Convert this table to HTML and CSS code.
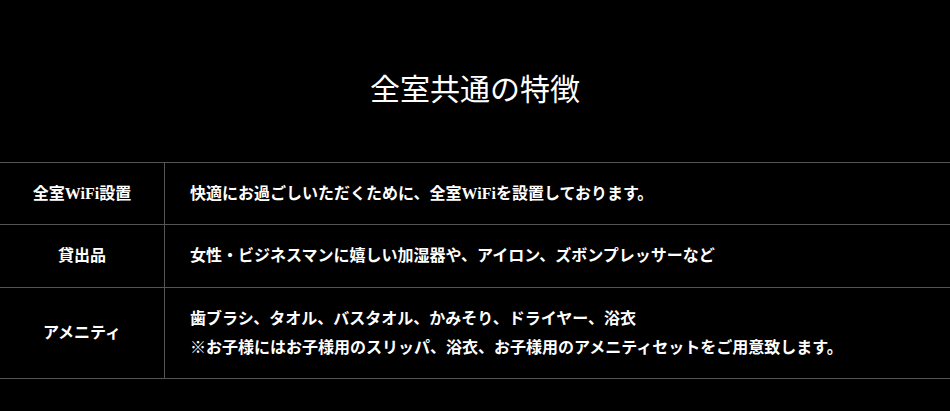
FILE: index.html
```html
<!DOCTYPE html>
<html lang="ja">
<head>
<meta charset="utf-8">
<title>全室共通の特徴</title>
<link rel="stylesheet" href="styles.css">
</head>
<body>
<section class="features">
  <h2 class="features-title">全室共通の特徴</h2>
  <div class="spec">
    <div class="spec-row">
      <div class="spec-head">全室WiFi設置</div>
      <div class="spec-body">快適にお過ごしいただくために、全室WiFiを設置しております。</div>
    </div>
    <div class="spec-row">
      <div class="spec-head">貸出品</div>
      <div class="spec-body">女性・ビジネスマンに嬉しい加湿器や、アイロン、ズボンプレッサーなど</div>
    </div>
    <div class="spec-row">
      <div class="spec-head">アメニティ</div>
      <div class="spec-body">歯ブラシ、タオル、バスタオル、かみそり、ドライヤー、浴衣<br>※お子様にはお子様用のスリッパ、浴衣、お子様用のアメニティセットをご用意致します。</div>
    </div>
  </div>
</section>
</body>
</html>
```

FILE: styles.css
```css
html, body {
  margin: 0;
  padding: 0;
  background: #000;
}

body {
  color: #fff;
  font-family: "Liberation Serif", "Noto Sans CJK JP", serif;
}

.features {
  padding-top: 69px;
}

.features-title {
  margin: 0 0 51px;
  font-size: 30px;
  line-height: 42px;
  font-weight: 400;
  text-align: center;
}

.spec {
  border-bottom: 1px solid #555;
}

.spec-row {
  display: grid;
  grid-template-columns: 164px 1fr;
  border-top: 1px solid #555;
}

.spec-head,
.spec-body {
  font-size: 16px;
  line-height: 29.3px;
  font-weight: 700;
  padding: 16px 0;
}

.spec-head {
  display: flex;
  align-items: center;
  justify-content: center;
}

.spec-body {
  border-left: 1px solid #555;
  padding-left: 25px;
}
```
